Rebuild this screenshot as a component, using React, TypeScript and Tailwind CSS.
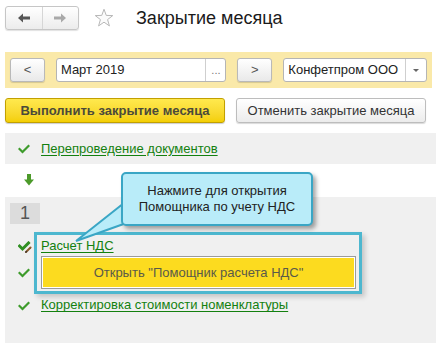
import React from 'react'

const FONT = { fontFamily: '"Liberation Sans", Arial, sans-serif' }

function Check() {
  return (
    <svg width="12" height="10" viewBox="0 0 12 10" aria-hidden>
      <path d="M1.5 5 L4.5 8 L10.5 2" fill="none" stroke="#3d9b2b" strokeWidth="2.2" strokeLinecap="square" />
    </svg>
  )
}

function CheckEdit() {
  return (
    <svg width="14" height="12" viewBox="0 0 14 12" aria-hidden>
      <path d="M1.5 5 L4.5 8 L10.5 2" fill="none" stroke="#2f8f22" strokeWidth="3" strokeLinecap="square" />
      <path d="M8 11 L12.5 6.5" stroke="#8a5a2b" strokeWidth="2" strokeLinecap="round" />
      <path d="M7.5 11.5 L8.8 10.2" stroke="#333" strokeWidth="1.2" />
    </svg>
  )
}

function ArrowDown() {
  return (
    <svg width="10" height="12" viewBox="0 0 10 12" aria-hidden>
      <rect x="3" y="0" width="4" height="6" fill="#4c9a2a" />
      <path d="M0 5.5 H10 L5 11.5 Z" fill="#4c9a2a" />
    </svg>
  )
}

function NavArrow({ dir, color }: { dir: 'left' | 'right'; color: string }) {
  return (
    <svg width="12" height="10" viewBox="0 0 12 10" aria-hidden style={dir === 'right' ? { transform: 'scaleX(-1)' } : undefined}>
      <rect x="4" y="3.5" width="8" height="3" fill={color} />
      <path d="M0 5 L5 0.5 V9.5 Z" fill={color} />
    </svg>
  )
}

function Star() {
  return (
    <svg width="20" height="20" viewBox="0 0 24 24" aria-hidden>
      <path
        d="M12 1.5 L14.7 8.9 L22.5 9.1 L16.3 13.9 L18.5 21.5 L12 17 L5.5 21.5 L7.7 13.9 L1.5 9.1 L9.3 8.9 Z"
        fill="#fbfbfb"
        stroke="#b8b8b8"
        strokeWidth="1.2"
        strokeLinejoin="round"
      />
    </svg>
  )
}

const smallBtn =
  'h-[24px] flex items-center justify-center rounded-[3px] border border-[#b9b9b9] bg-gradient-to-b from-white to-[#e9e9e9] shadow-[0_1px_1px_rgba(0,0,0,0.15)] text-[13px] text-[#555]'

export default function App() {
  return (
    <div className="relative w-[436px] h-[343px] overflow-hidden bg-white text-[#333]" style={FONT}>
      {/* header */}
      <div className="flex items-center pt-[6px] pl-[5px] h-[30px]">
        <div className="flex h-[24px] w-[74px] rounded-[3px] border border-[#c6c6c6] bg-gradient-to-b from-white to-[#ececec] shadow-[0_1px_1px_rgba(0,0,0,0.12)]">
          <div className="flex-1 flex items-center justify-center">
            <NavArrow dir="left" color="#555" />
          </div>
          <div className="flex-1 flex items-center justify-center border-l border-[#d6d6d6]">
            <NavArrow dir="right" color="#a9a9a9" />
          </div>
        </div>
        <div className="ml-[15px] flex items-center">
          <Star />
        </div>
        <div className="ml-[22px] text-[18px] leading-none text-[#1a1a1a] whitespace-nowrap">Закрытие месяца</div>
      </div>

      {/* period band */}
      <div className="mt-[22px] ml-[5px] w-[427px] h-[36px] bg-[#fae9a9] flex items-center px-[5px] gap-[11px] text-[13px]">
        <div className={`${smallBtn} w-[35px]`}>&lt;</div>
        <div className="h-[24px] w-[171px] flex rounded-[3px] border border-[#b5b5b5] bg-white">
          <div className="flex-1 flex items-center pl-[4px] text-[#222] whitespace-nowrap">Март 2019</div>
          <div className="w-[20px] border-l border-[#cfcfcf] flex items-end justify-center pb-[5px] text-[11px] leading-none text-[#777]">...</div>
        </div>
        <div className={`${smallBtn} w-[35px]`}>&gt;</div>
        <div className="h-[24px] w-[144px] flex rounded-[3px] border border-[#b5b5b5] bg-white">
          <div className="flex-1 flex items-center pl-[4px] text-[#222] whitespace-nowrap">Конфетпром ООО</div>
          <div className="w-[21px] border-l border-[#cfcfcf] flex items-center justify-center">
            <span className="block w-0 h-0 border-l-[3px] border-r-[3px] border-t-[3px] border-l-transparent border-r-transparent border-t-[#666]" />
          </div>
        </div>
      </div>

      {/* actions */}
      <div className="mt-[10px] ml-[5px] flex gap-[11px] text-[13px]">
        <div className="h-[25px] w-[220px] flex items-center justify-center rounded-[3px] border border-[#c2a000] bg-gradient-to-b from-[#ffe94d] to-[#f4cf00] shadow-[0_1px_1px_rgba(0,0,0,0.2)] font-bold text-[#4a4a3a] whitespace-nowrap">
          Выполнить закрытие месяца
        </div>
        <div className="h-[25px] w-[190px] flex items-center justify-center rounded-[3px] border border-[#bdbdbd] bg-gradient-to-b from-white to-[#ececec] shadow-[0_1px_1px_rgba(0,0,0,0.15)] text-[#333] whitespace-nowrap">
          Отменить закрытие месяца
        </div>
      </div>

      {/* steps */}
      <div className="mt-[10px] ml-[5px] w-[431px] h-[210px] bg-[#f0f0f0] text-[13px]">
        <div className="h-[31px] flex items-center">
          <div className="w-[36px] flex justify-center pl-[2px]">
            <Check />
          </div>
          <span className="text-[#13800f] underline underline-offset-2">Перепроведение документов</span>
        </div>
        <div className="h-[33px] bg-white flex items-center">
          <div className="w-[36px] flex justify-center pl-[12px] pb-[2px]">
            <ArrowDown />
          </div>
        </div>
        <div className="pt-[6px] pl-[5px]">
          <div className="w-[30px] h-[21px] bg-[#dcdcdc] flex items-center justify-center text-[18px] text-[#555]">1</div>
        </div>
        <div className="mt-[13px] h-[18px] flex items-center">
          <div className="w-[36px] flex justify-center pl-[4px] pt-[2px]">
            <CheckEdit />
          </div>
          <span className="text-[#13800f] underline underline-offset-2">Расчет НДС</span>
        </div>
        <div className="mt-[1px] flex items-center">
          <div className="w-[36px] flex justify-center pl-[2px]">
            <Check />
          </div>
          <div className="w-[315px] h-[33px] border border-[#9b9b9b] p-[1px] bg-white">
            <div className="h-full bg-[#fcdb1f] flex items-center justify-center text-[#5a5a4a]">
              Открыть "Помощник расчета НДС"
            </div>
          </div>
        </div>
        <div className="mt-[7px] h-[18px] flex items-center">
          <div className="w-[36px] flex justify-center pl-[2px] pt-[2px]">
            <Check />
          </div>
          <span className="text-[#13800f] underline underline-offset-2">Корректировка стоимости номенклатуры</span>
        </div>
      </div>

      {/* highlight frame */}
      <div className="absolute left-[34px] top-[232px] w-[328px] h-[62px] border-[3px] border-[#4db7cf] shadow-[3px_3px_5px_rgba(0,0,0,0.18)]" />

      {/* callout tail */}
      <svg className="absolute left-0 top-0" width="436" height="343" aria-hidden>
        <path d="M124 203 L76 241 L132 221" fill="#b9ecf9" stroke="#3aa6c5" strokeWidth="2" strokeLinejoin="miter" />
      </svg>

      {/* callout */}
      <div className="absolute left-[121px] top-[172px] w-[192px] h-[54px] rounded-[5px] border-2 border-[#3aa6c5] bg-[#b9ecf9] shadow-[3px_3px_4px_rgba(0,0,0,0.35)] flex flex-col items-center justify-center text-[13px] leading-[16px] text-[#222]">
        <div>Нажмите для открытия</div>
        <div>Помощника по учету НДС</div>
      </div>
    </div>
  )
}
